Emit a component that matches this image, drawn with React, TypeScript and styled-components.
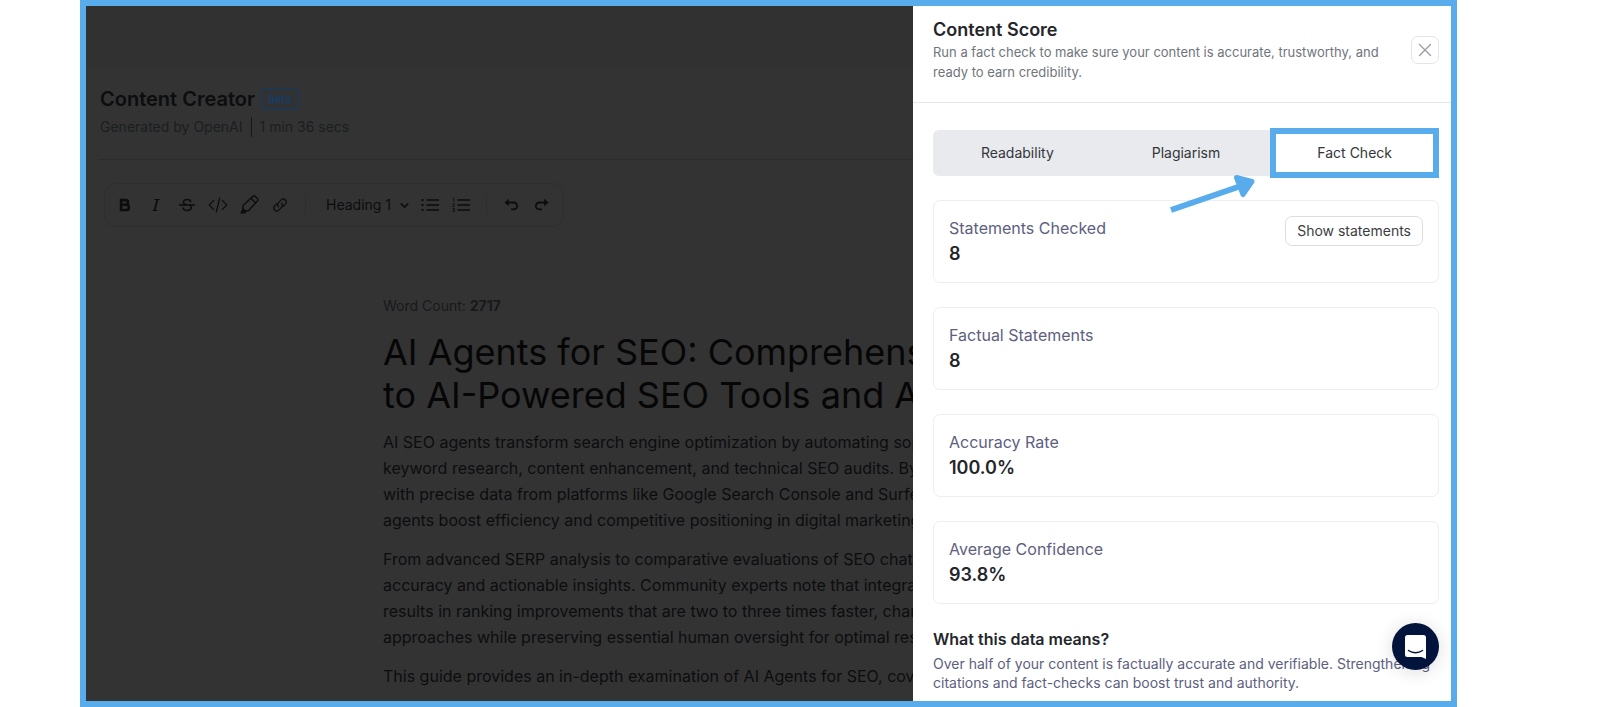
import React from "react";
import styled, { createGlobalStyle } from "styled-components";
import { X, ChevronDown } from "lucide-react";

const sky = "#58aceb";

const GlobalStyle = createGlobalStyle`
  * { box-sizing: border-box; }
  body {
    margin: 0;
    background: #fff;
    font-family: Inter, "Liberation Sans", sans-serif;
    color: #24262b;
  }
  h1, h2, h3, p, dl, dt, dd { margin: 0; }
  button, select { font: inherit; color: inherit; }
`;

const Page = styled.div`
  height: 100vh;
  padding: 0 148px 0 80px;
`;

const Frame = styled.div`
  position: relative;
  display: flex;
  height: 100%;
  border: 6px solid ${sky};
  overflow: hidden;
`;

const Workspace = styled.main`
  flex: 1;
  min-width: 0;
  display: flex;
  flex-direction: column;
  background: #333;
  color: #0c0d0e;
  overflow: hidden;
`;

const TopStrip = styled.div`
  flex: none;
  height: 62px;
  background: #313131;
`;

const PageHeader = styled.header`
  flex: none;
  margin-left: 12px;
  padding: 18px 2px 22px;
  border-bottom: 1px solid #2b2c2d;
`;

const TitleRow = styled.div`
  display: flex;
  align-items: center;
  gap: 6px;
  height: 26px;
`;

const AppTitle = styled.h1`
  font-size: 20px;
  line-height: 26px;
  font-weight: 600;
`;

const Badge = styled.span`
  padding: 0 6px;
  border: 1px solid #123a66;
  border-radius: 4px;
  background: #303234;
  color: #123d70;
  font-size: 11px;
  line-height: 20px;
  font-weight: 500;
`;

const Meta = styled.div`
  display: flex;
  align-items: center;
  margin-top: 5px;
  color: #1a1e20;
  font-size: 14px;
  line-height: 20px;
`;

const MetaItem = styled.span`
  & + & {
    margin-left: 8px;
    padding-left: 8px;
    border-left: 1px solid #15181a;
  }
`;

const Toolbar = styled.div`
  flex: none;
  align-self: flex-start;
  display: flex;
  align-items: center;
  height: 44px;
  margin: 23px 0 0 18px;
  padding: 0 6px 0 4px;
  border: 1px solid #2e2e2e;
  border-radius: 12px;
`;

const Tool = styled.button`
  display: flex;
  align-items: center;
  justify-content: center;
  width: 31px;
  height: 32px;
  padding: 0;
  border: 0;
  background: none;
`;

const Divider = styled.span<{ $wide?: boolean }>`
  width: 1px;
  height: 20px;
  margin: 0 ${(p) => (p.$wide ? 20 : 8)}px 0 10px;
  background: #2d2d2e;
`;

const BlockPicker = styled.label`
  display: flex;
  align-items: center;
  width: 88px;
`;

const BlockSelect = styled.select`
  appearance: none;
  width: 72px;
  padding: 0;
  border: 0;
  background: none;
  font-size: 14px;
  line-height: 20px;
`;

const Article = styled.article`
  flex: none;
  width: 640px;
  margin: 69px 0 0 297px;
`;

const WordCount = styled.p`
  color: #17191b;
  font-size: 14px;
  line-height: 20px;
`;

const ArticleTitle = styled.h2`
  margin-top: 15px;
  font-size: 36px;
  line-height: 43px;
  font-weight: 400;
  color: #060606;
  white-space: nowrap;
`;

const Paragraph = styled.p`
  margin: 12px 0 13px;
  font-size: 16px;
  line-height: 26px;
  white-space: nowrap;

  & + & { margin-top: 0; }
`;

const Panel = styled.aside`
  flex: 0 0 538px;
  display: flex;
  flex-direction: column;
  background: #fff;
`;

const PanelHeader = styled.header`
  display: flex;
  align-items: center;
  justify-content: space-between;
  padding: 12px 12px 20px 20px;
  border-bottom: 1px solid #e4e6e9;
`;

const PanelTitle = styled.h2`
  font-size: 18px;
  line-height: 24px;
  font-weight: 600;
`;

const PanelHint = styled.p`
  max-width: 468px;
  color: #6f757d;
  font-size: 13px;
  line-height: 20px;
`;

const CloseButton = styled.button`
  display: flex;
  align-items: center;
  justify-content: center;
  flex: none;
  width: 28px;
  height: 28px;
  padding: 0;
  border: 1px solid #e3e4e8;
  border-radius: 7px;
  background: #fff;
  color: #9a9ea6;
`;

const PanelBody = styled.div`
  display: flex;
  flex-direction: column;
  gap: 24px;
  padding: 27px 12px 0 20px;
`;

const TabList = styled.div`
  display: grid;
  grid-template-columns: repeat(3, 1fr);
  height: 46px;
  border-radius: 6px;
  background: #e9eaed;
`;

const Tab = styled.button<{ $active?: boolean }>`
  margin: ${(p) => (p.$active ? "-2px 0" : "0")};
  padding: 0;
  border: ${(p) => (p.$active ? `6px solid ${sky}` : "0")};
  background: ${(p) => (p.$active ? "#fff" : "none")};
  color: #33363b;
  font-size: 14px;
  line-height: 20px;
`;

const Cards = styled.dl`
  display: flex;
  flex-direction: column;
  gap: 24px;
`;

const Card = styled.div`
  display: flex;
  justify-content: space-between;
  align-items: flex-start;
  height: 83px;
  padding: 15px;
  border: 1px solid #eceeef;
  border-radius: 7px;
`;

const CardLabel = styled.dt`
  color: #5d6080;
  font-size: 16px;
  line-height: 24px;
`;

const CardValue = styled.dd`
  font-size: 18px;
  line-height: 28px;
  font-weight: 600;
`;

const OutlineButton = styled.button`
  height: 30px;
  padding: 0 11px;
  border: 1px solid #dcdde1;
  border-radius: 7px;
  background: #fff;
  color: #3b3d42;
  font-size: 14px;
  line-height: 20px;
`;

const Explanation = styled.section`
  margin-top: -1px;
`;

const ExplanationTitle = styled.h3`
  font-size: 16px;
  line-height: 24px;
  font-weight: 600;
`;

const ExplanationText = styled.p`
  margin-top: 3px;
  color: #5d6080;
  font-size: 14px;
  line-height: 19px;
`;

const ChatLauncher = styled.button`
  position: absolute;
  right: 12px;
  bottom: 31px;
  display: flex;
  align-items: center;
  justify-content: center;
  width: 47px;
  height: 47px;
  padding: 0;
  border: 0;
  border-radius: 50%;
  background: #02133c;
  box-shadow: 0 2px 18px rgba(0, 0, 0, 0.14);
`;

const PointerArrow = styled.svg`
  position: absolute;
  top: 165px;
  right: 191px;
  width: 90px;
  height: 46px;
`;

const stats = [
  { label: "Statements Checked", value: "8", action: "Show statements" },
  { label: "Factual Statements", value: "8" },
  { label: "Accuracy Rate", value: "100.0%" },
  { label: "Average Confidence", value: "93.8%" },
];

const paragraphs = [
  [
    "AI SEO agents transform search engine optimization by automating sophisticated",
    "keyword research, content enhancement, and technical SEO audits. By combining",
    "with precise data from platforms like Google Search Console and Surfer Capital",
    "agents boost efficiency and competitive positioning in digital marketing.",
  ],
  [
    "From advanced SERP analysis to comparative evaluations of SEO chatbots,",
    "accuracy and actionable insights. Community experts note that integrating",
    "results in ranking improvements that are two to three times faster, changing",
    "approaches while preserving essential human oversight for optimal results.",
  ],
  ["This guide provides an in-depth examination of AI Agents for SEO, covering"],
];

const lines = (text: string[]) =>
  text.map((line, i) => (
    <React.Fragment key={line}>
      {i > 0 && <br />}
      {line}
    </React.Fragment>
  ));

const BoldIcon = () => (
  <svg width="16" height="16" viewBox="0 0 16 16" fill="none" stroke="currentColor" strokeWidth="2.6">
    <path d="M4.1 3.1h4.6a2.3 2.3 0 0 1 0 4.7H4.1zM4.1 7.8h5.2a2.6 2.6 0 0 1 0 5.2H4.1z" />
  </svg>
);

const ItalicIcon = () => (
  <svg width="16" height="16" viewBox="0 0 16 16" fill="none" stroke="currentColor">
    <path d="M6.5 2.5h5M4.5 13.5h5" strokeWidth="1" />
    <path d="M9.4 2.5 6.6 13.5" strokeWidth="1.8" />
  </svg>
);

const StrikeIcon = () => (
  <svg width="18" height="16" viewBox="0 0 18 16" fill="none" stroke="currentColor" strokeWidth="1.6">
    <path d="M1 8h16" />
    <path d="M12.8 5.2C12.6 3.4 11.2 2.5 9.1 2.5 6.9 2.5 5.5 3.5 5.5 5.2 5.5 6.7 6.6 7.4 8.6 7.9" />
    <path d="M12 8.6c.8.5 1.2 1.1 1.2 2 0 1.8-1.5 2.9-4 2.9-2.400 0-3.900-1-4.100-3" />
  </svg>
);

const CodeIcon = () => (
  <svg width="20" height="18" viewBox="0 0 20 18" fill="none" stroke="currentColor" strokeWidth="1.2">
    <path d="M6 4.2 1.2 9 6 13.8M14 4.2 18.8 9 14 13.8M11.8 1.5 8.2 16.5" />
  </svg>
);

const MarkerIcon = () => (
  <svg width="20" height="20" viewBox="0 0 20 20" fill="none" stroke="currentColor" strokeWidth="1.4" strokeLinejoin="round">
    <path d="M14 1.200a1.400 1.400 0 0 1 2 0l2.600 2.600a1.400 1.400 0 0 1 0 2L9.400 15.800 3.800 15.900 4 10.400zM12.200 3.400l4.500 4.500" />
    <path d="M3.8 13 1 18.6h5l1.8-2.6z" fill="currentColor" stroke="none" />
  </svg>
);

const LinkIcon = () => (
  <svg width="16" height="16" viewBox="0 0 16 16" fill="none" stroke="currentColor" strokeWidth="1.2" strokeLinecap="round">
    <path d="M6.5 9.8a3 3 0 0 1 0-4.2l2.9-2.9a3 3 0 0 1 4.2 4.2l-2.4 2.4" />
    <path d="M9.5 6.2a3 3 0 0 1 0 4.2l-2.9 2.9a3 3 0 0 1-4.2-4.2l2.4-2.4" />
  </svg>
);

const ListIcon = ({ numbered }: { numbered?: boolean }) => (
  <svg width="18" height="16" viewBox="0 0 18 16" fill="none" stroke="currentColor" strokeWidth="1.4">
    <path d="M5.5 3H18M5.5 8H18M5.5 13H18" />
    {numbered ? (
      <path d="M.6 1.5h1.2V4.500M.5 6.600h1.700v1.300L.6 9.400h1.800M.5 11.500h1.800v3.200H.5M1 13.100h1.200" strokeWidth=".8" />
    ) : (
      <path d="M.5 3h2M.5 8h2M.5 13h2" strokeWidth="2" />
    )}
  </svg>
);

const UndoIcon = ({ flip }: { flip?: boolean }) => (
  <svg width="16" height="16" viewBox="0 0 16 16" fill="none" stroke="currentColor" strokeWidth="1.8">
    <g transform={flip ? "matrix(-1 0 0 1 16 0)" : undefined}>
      <path d="M4 5.500h6.700a3.400 3.400 0 0 1 0 6.800H8" />
      <path d="M5.800 1.800 1.400 5.500l4.400 3.700z" fill="currentColor" stroke="none" />
    </g>
  </svg>
);

export default function App() {
  return (
    <>
      <GlobalStyle />
      <Page>
        <Frame>
          <Workspace>
            <TopStrip />
            <PageHeader>
              <TitleRow>
                <AppTitle>Content Creator</AppTitle>
                <Badge>Beta</Badge>
              </TitleRow>
              <Meta>
                <MetaItem>Generated by OpenAI</MetaItem>
                <MetaItem>1 min 36 secs</MetaItem>
              </Meta>
            </PageHeader>
            <Toolbar role="toolbar" aria-label="Formatting">
              <Tool aria-label="Bold"><BoldIcon /></Tool>
              <Tool aria-label="Italic"><ItalicIcon /></Tool>
              <Tool aria-label="Strikethrough"><StrikeIcon /></Tool>
              <Tool aria-label="Code"><CodeIcon /></Tool>
              <Tool aria-label="Highlight"><MarkerIcon /></Tool>
              <Tool aria-label="Link"><LinkIcon /></Tool>
              <Divider $wide />
              <BlockPicker>
                <BlockSelect aria-label="Block type" defaultValue="h1">
                  <option value="h1">Heading 1</option>
                  <option value="p">Paragraph</option>
                </BlockSelect>
                <ChevronDown size={13} strokeWidth={3} />
              </BlockPicker>
              <Tool aria-label="Bulleted list"><ListIcon /></Tool>
              <Tool aria-label="Numbered list"><ListIcon numbered /></Tool>
              <Divider />
              <Tool aria-label="Undo"><UndoIcon /></Tool>
              <Tool aria-label="Redo"><UndoIcon flip /></Tool>
            </Toolbar>
            <Article>
              <WordCount>Word Count: <strong>2717</strong></WordCount>
              <ArticleTitle>
                {lines(["AI Agents for SEO: Comprehensive Guide", "to AI-Powered SEO Tools and Automation"])}
              </ArticleTitle>
              {paragraphs.map((p) => (
                <Paragraph key={p[0]}>{lines(p)}</Paragraph>
              ))}
            </Article>
          </Workspace>
          <Panel aria-label="Content Score">
            <PanelHeader>
              <div>
                <PanelTitle>Content Score</PanelTitle>
                <PanelHint>
                  Run a fact check to make sure your content is accurate, trustworthy, and ready to earn credibility.
                </PanelHint>
              </div>
              <CloseButton aria-label="Close"><X size={22} strokeWidth={1.5} /></CloseButton>
            </PanelHeader>
            <PanelBody>
              <TabList role="tablist">
                <Tab role="tab">Readability</Tab>
                <Tab role="tab">Plagiarism</Tab>
                <Tab role="tab" aria-selected $active>Fact Check</Tab>
              </TabList>
              <Cards>
                {stats.map((s) => (
                  <Card key={s.label}>
                    <div>
                      <CardLabel>{s.label}</CardLabel>
                      <CardValue>{s.value}</CardValue>
                    </div>
                    {s.action && <OutlineButton>{s.action}</OutlineButton>}
                  </Card>
                ))}
              </Cards>
              <Explanation>
                <ExplanationTitle>What this data means?</ExplanationTitle>
                <ExplanationText>
                  Over half of your content is factually accurate and verifiable. Strengthening citations and fact-checks can boost trust and authority.
                </ExplanationText>
              </Explanation>
            </PanelBody>
          </Panel>
          <PointerArrow viewBox="0 0 90 46" aria-hidden="true">
            <path d="M1 39 68 16" stroke={sky} strokeWidth="6" />
            <path d="M66.5 6.5 82 10.5 73 23.5z" fill={sky} stroke={sky} strokeWidth="5" strokeLinejoin="round" />
          </PointerArrow>
          <ChatLauncher aria-label="Open chat">
            <svg width="21" height="24" viewBox="0 0 21 24">
              <path d="M2.5 0h16A2.5 2.5 0 0 1 21 2.5V24l-4.5-2h-14A2.5 2.5 0 0 1 0 19.5v-17A2.5 2.5 0 0 1 2.5 0z" fill="#fff" />
              <path d="M3.5 15.5c4 3 10 3 14 0" fill="none" stroke="#02133c" strokeWidth="1.5" strokeLinecap="round" />
            </svg>
          </ChatLauncher>
        </Frame>
      </Page>
    </>
  );
}
